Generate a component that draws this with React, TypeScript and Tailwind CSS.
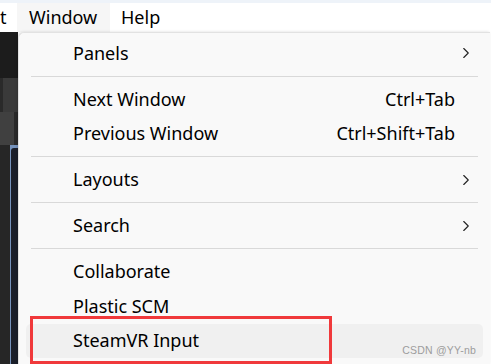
import { ChevronRight } from 'lucide-react';

type Item =
  | { kind: 'item'; label: string; shortcut?: string; sub?: boolean; active?: boolean }
  | { kind: 'sep' };

const MENU: Item[] = [
  { kind: 'item', label: 'Panels', sub: true },
  { kind: 'sep' },
  { kind: 'item', label: 'Next Window', shortcut: 'Ctrl+Tab' },
  { kind: 'item', label: 'Previous Window', shortcut: 'Ctrl+Shift+Tab' },
  { kind: 'sep' },
  { kind: 'item', label: 'Layouts', sub: true },
  { kind: 'sep' },
  { kind: 'item', label: 'Search', sub: true },
  { kind: 'sep' },
  { kind: 'item', label: 'Collaborate' },
  { kind: 'item', label: 'Plastic SCM' },
  { kind: 'item', label: 'SteamVR Input', active: true },
];

export default function App() {
  return (
    <div
      className="w-[491px] h-[364px] overflow-hidden flex flex-col bg-white text-black"
      style={{ fontFamily: '"Noto Sans", "Noto Sans CJK SC", sans-serif' }}
    >
      {/* top window strip */}
      <div className="h-[3px] bg-[#eef3f9] shrink-0" />

      {/* menubar */}
      <div className="h-[29px] shrink-0 flex items-stretch text-[18px]">
        <div className="w-[17px] flex items-center">t</div>
        <div className="w-[93px] bg-[#f6f6f6] flex items-center pl-[12px]">Window</div>
        <div className="flex items-center pl-[11px]">Help</div>
      </div>

      <div className="flex-1 flex min-h-0">
        {/* editor behind the menu */}
        <div className="w-[18px] shrink-0 flex flex-col bg-[#2a2a2a]">
          <div className="h-[46px] bg-[#1c1c1c]" />
          <div className="h-[34px] bg-[#3a3a3a] border-l border-[#2a2a2a] ml-[2px]" />
          <div className="h-[33px] bg-[#404040] w-[14px]" />
          <div className="flex-1 flex">
            <div className="w-[10px] bg-[#262626]" />
            <div className="w-[8px] bg-[#7693bd] pl-[1px] pt-[3px]">
              <div className="h-full bg-[#1b1f2a] rounded-tl-[3px]" />
            </div>
          </div>
        </div>

        {/* dropdown menu */}
        <div className="relative w-[472px] shrink-0 bg-[#f9f9f9] border-l border-t border-[#e2e2e2] rounded-tl-[6px] pt-[3px] text-[18px] shadow-[-1px_0_3px_rgba(0,0,0,0.15)]">
          {MENU.map((item, i) =>
            item.kind === 'sep' ? (
              <div key={i} className="h-[11.5px] flex items-center px-[12px]">
                <div className="h-px w-full bg-[#d9d9d9]" />
              </div>
            ) : (
              <div
                key={i}
                className={`h-[34.5px] flex items-center mx-[7px] pl-[47px] pr-[28px] rounded-[5px] ${
                  item.active ? 'bg-[#f0f0f0]' : ''
                }`}
              >
                <span className="flex-1">{item.label}</span>
                {item.shortcut && <span>{item.shortcut}</span>}
                {item.sub && (
                  <ChevronRight className="w-[18px] h-[18px] -mr-[20px] text-[#222]" strokeWidth={1.5} />
                )}
              </div>
            )
          )}

          {/* annotation highlight */}
          <div className="absolute left-[11px] top-[283px] w-[302px] h-[48px] border-[3px] border-[#f0393b] pointer-events-none" />

          {/* watermark */}
          <div
            className="absolute right-[14px] top-[310px] text-[10.5px] tracking-[0.2px] text-[#9d9d9d]"
            style={{ fontFamily: '"Liberation Sans", sans-serif' }}
          >
            CSDN @YY-nb
          </div>
        </div>
      </div>
    </div>
  );
}
